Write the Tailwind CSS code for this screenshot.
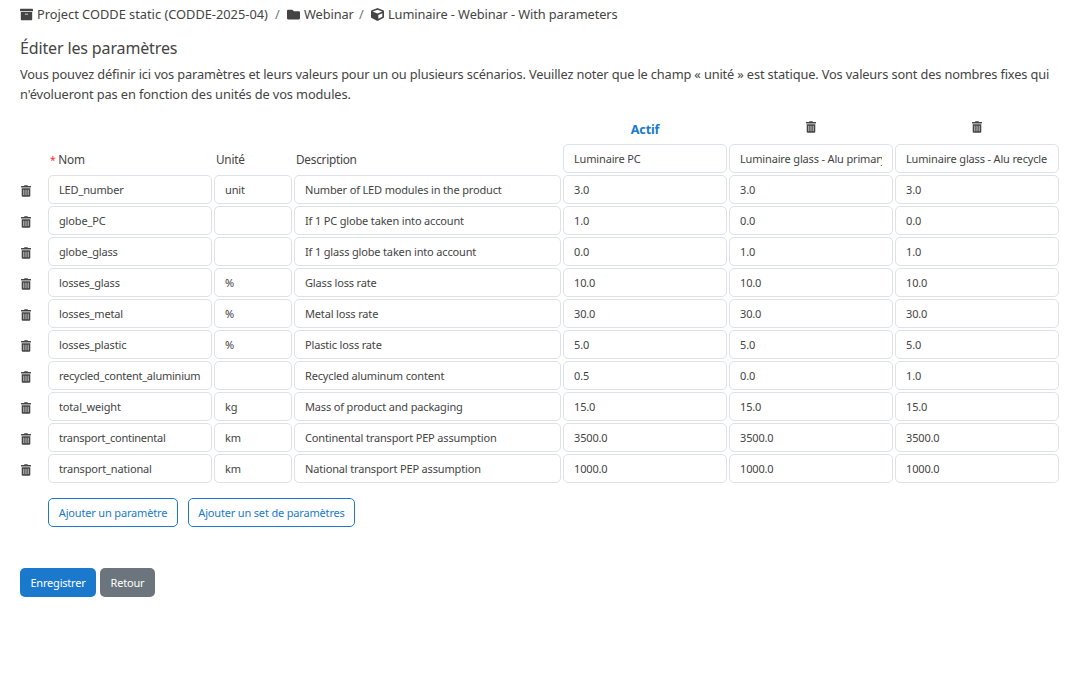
<!DOCTYPE html>
<html lang="fr">
<head>
  <meta charset="UTF-8" />
  <meta name="viewport" content="width=device-width, initial-scale=1.0" />
  <title>Éditer les paramètres</title>
  <script src="https://cdn.jsdelivr.net/npm/@tailwindcss/browser@4"></script>
</head>
<body class="bg-white min-h-screen px-5 pt-[5px] font-['Noto_Sans',sans-serif] text-[12.8px] text-[#444]">

  <svg class="hidden">
    <symbol id="trash" viewBox="0 0 448 512">
      <path fill="#444" d="M32 464a48 48 0 0 0 48 48h288a48 48 0 0 0 48-48V128H32zm272-256a16 16 0 0 1 32 0v224a16 16 0 0 1-32 0zm-96 0a16 16 0 0 1 32 0v224a16 16 0 0 1-32 0zm-96 0a16 16 0 0 1 32 0v224a16 16 0 0 1-32 0zM432 32H312l-9.4-18.7A24 24 0 0 0 281.1 0H166.8a23.72 23.72 0 0 0-21.4 13.3L136 32H16A16 16 0 0 0 0 48v32a16 16 0 0 0 16 16h416a16 16 0 0 0 16-16V48a16 16 0 0 0-16-16z" />
    </symbol>
  </svg>

  <nav class="flex items-center h-5 whitespace-nowrap">
    <svg class="w-[13px] h-[13px] mr-1 mb-[2px]" viewBox="0 0 512 512" fill="#444">
      <path d="M32 448c0 17.7 14.3 32 32 32h384c17.7 0 32-14.3 32-32V160H32v288zm160-212c0-6.6 5.4-12 12-12h104c6.6 0 12 5.4 12 12v8c0 6.6-5.4 12-12 12H204c-6.6 0-12-5.4-12-12v-8zM480 32H32C14.3 32 0 46.3 0 64v48c0 8.8 7.2 16 16 16h480c8.8 0 16-7.2 16-16V64c0-17.7-14.3-32-32-32z" />
    </svg>
    <span class="w-[232px]">Project CODDE static (CODDE-2025-04)</span>
    <span class="w-[18px] pl-[6px] text-[#6c757d]">/</span>
    <svg class="w-[13px] h-[13px] mr-1 mb-[2px]" viewBox="0 0 512 512" fill="#444">
      <path d="M464 128H272l-64-64H48C21.5 64 0 85.5 0 112v288c0 26.5 21.5 48 48 48h416c26.5 0 48-21.5 48-48V176c0-26.5-21.5-48-48-48z" />
    </svg>
    <span class="w-[49px] tracking-[-0.1px]">Webinar</span>
    <span class="w-[18px] pl-[6px] text-[#6c757d]">/</span>
    <svg class="w-[13px] h-[13px] mr-1 mb-[2px]" viewBox="0 0 512 512" fill="#444">
      <path d="M239.1 6.3l-208 78c-18.7 7-31.1 25-31.1 45v225.1c0 18.2 10.3 34.8 26.5 42.9l208 104c13.5 6.8 29.4 6.8 42.9 0l208-104c16.3-8.1 26.5-24.8 26.5-42.9V129.3c0-20-12.4-37.9-31.1-44.9l-208-78C262 2.2 250 2.2 239.1 6.3zM256 68.4l192 72v1.1l-192 78-192-78v-1.1l192-72zm32 356V275.5l160-65v133.9l-160 80z" />
    </svg>
    <span class="tracking-[-0.1px]">Luminaire - Webinar - With parameters</span>
  </nav>

  <h1 class="mt-[13px] h-5 leading-5 text-[16px] tracking-[-0.14px]">Éditer les paramètres</h1>
  <p class="mt-[6px] h-10 leading-5 tracking-[-0.146px] whitespace-nowrap">Vous pouvez définir ici vos paramètres et leurs valeurs pour un ou plusieurs scénarios. Veuillez noter que le champ « unité » est statique. Vos valeurs sont des nombres fixes qui<br /><span class="tracking-[-0.11px]">n'évolueront pas en fonction des unités de vos modules.</span></p>

  <div id="params" class="mt-[15px] grid grid-cols-[26px_164px_78px_267px_164px_164px_164px] gap-0.5 text-[11px] tracking-[-0.16px]">
    <div class="col-span-4 h-[23px]"></div>
    <div class="text-center font-bold text-[12.6px] leading-[22px] h-[23px] text-[#1a79cd]">Actif</div>
    <div class="flex justify-center pt-[2px]"><svg class="w-[10px] h-3"><use href="#trash" /></svg></div>
    <div class="flex justify-center pt-[2px]"><svg class="w-[10px] h-3"><use href="#trash" /></svg></div>

    <div></div>
    <div class="pl-[2px] pt-[5px] leading-5 text-[11.8px] tracking-[-0.26px]"><span class="text-[10.5px] text-red-500">*</span> Nom</div>
    <div class="pl-[2px] pt-[5px] leading-5 text-[11.8px] tracking-[-0.26px]">Unité</div>
    <div class="pl-[2px] pt-[5px] leading-5 text-[11.8px] tracking-[-0.26px]">Description</div>
    <div class="h-[29px] border border-[#dee2e6] rounded-[5px] px-2.5 leading-[27px]"><div class="overflow-hidden whitespace-nowrap">Luminaire PC</div></div>
    <div class="h-[29px] border border-[#dee2e6] rounded-[5px] px-2.5 leading-[27px]"><div class="overflow-hidden whitespace-nowrap">Luminaire glass - Alu primary</div></div>
    <div class="h-[29px] border border-[#dee2e6] rounded-[5px] px-2.5 leading-[27px]"><div class="overflow-hidden whitespace-nowrap">Luminaire glass - Alu recycle</div></div>
  </div>

  <div class="mt-[15px] ml-7 flex gap-2.5 text-[11px] tracking-[-0.17px]">
    <button class="w-[130px] h-[29px] pt-0.5 border border-[#1a79cd] rounded-[5px] text-[#1a79cd] whitespace-nowrap">Ajouter un paramètre</button>
    <button class="w-[167px] h-[29px] pt-0.5 border border-[#1a79cd] rounded-[5px] text-[#1a79cd] whitespace-nowrap">Ajouter un set de paramètres</button>
  </div>

  <div class="mt-[41px] flex gap-1 text-[11px] tracking-[-0.2px] text-white">
    <button class="w-[76px] h-[29px] pt-0.5 rounded-[5px] bg-[#1a79cd]">Enregistrer</button>
    <button class="w-[55px] h-[29px] pt-0.5 rounded-[5px] bg-[#6c757d]">Retour</button>
  </div>

  <script>
    const rows = [
      ["LED_number", "unit", "Number of LED modules in the product", "3.0", "3.0", "3.0"],
      ["globe_PC", "", "If 1 PC globe taken into account", "1.0", "0.0", "0.0"],
      ["globe_glass", "", "If 1 glass globe taken into account", "0.0", "1.0", "1.0"],
      ["losses_glass", "%", "Glass loss rate", "10.0", "10.0", "10.0"],
      ["losses_metal", "%", "Metal loss rate", "30.0", "30.0", "30.0"],
      ["losses_plastic", "%", "Plastic loss rate", "5.0", "5.0", "5.0"],
      ["recycled_content_aluminium", "", "Recycled aluminum content", "0.5", "0.0", "1.0"],
      ["total_weight", "kg", "Mass of product and packaging", "15.0", "15.0", "15.0"],
      ["transport_continental", "km", "Continental transport PEP assumption", "3500.0", "3500.0", "3500.0"],
      ["transport_national", "km", "National transport PEP assumption", "1000.0", "1000.0", "1000.0"],
    ];

    const trash = `<div class="pt-[10px] pl-px"><svg class="w-[10px] h-3"><use href="#trash" /></svg></div>`;
    const field = (text) => {
      // long names need tighter spacing to fit the column
      const spacing = text.length > 20 && text.includes("_") ? "tracking-[-0.24px]" : "";
      return `<div class="h-[29px] border border-[#dee2e6] rounded-[5px] px-2.5 leading-[27px]"><div class="overflow-hidden whitespace-nowrap ${spacing}">${text}</div></div>`;
    };

    document.getElementById("params").insertAdjacentHTML(
      "beforeend",
      rows.map((row) => trash + row.map(field).join("")).join("")
    );
  </script>

</body>
</html>
